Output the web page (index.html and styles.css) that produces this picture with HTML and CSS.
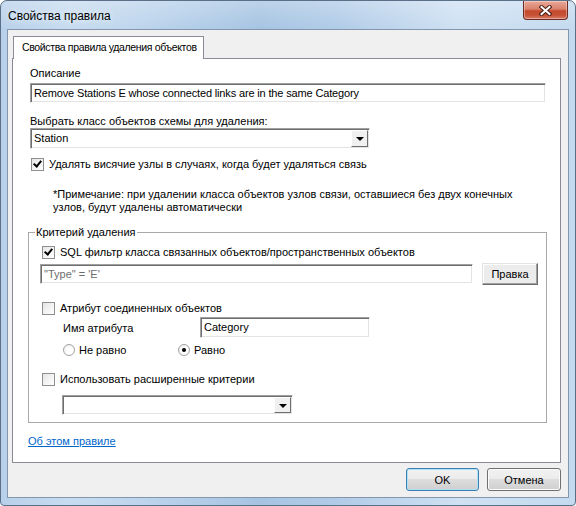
FILE: index.html
```html
<!DOCTYPE html>
<html lang="ru">
<head>
    <meta charset="UTF-8">
    <title>Свойства правила</title>
    <link rel="stylesheet" href="styles.css">
</head>
<body>
    <div class="window">
        <div class="titlebar">
            <span class="title">Свойства правила</span>
            <button class="close" title="Закрыть">
                <svg width="13" height="11" viewBox="0 0 13 11">
                    <path d="M2.5 2 L10.5 9 M10.5 2 L2.5 9" stroke="#4a1d16" stroke-width="4" stroke-linecap="square"/>
                    <path d="M2.5 2 L10.5 9 M10.5 2 L2.5 9" stroke="#fff" stroke-width="2" stroke-linecap="square"/>
                </svg>
            </button>
        </div>

        <div class="client">
            <div class="tabs">
                <div class="tab active">Свойства правила удаления объектов</div>
            </div>

            <div class="tab-page">
                <div class="field-label">Описание</div>
                <div class="textbox description">Remove Stations E whose connected links are in the same Category</div>

                <div class="field-label second">Выбрать класс объектов схемы для удаления:</div>
                <div class="combo station">
                    <span class="combo-text">Station</span>
                    <span class="combo-btn"><span class="arrow"></span></span>
                </div>

                <label class="check-row dangling">
                    <span class="checkbox checked"></span>
                    Удалять висячие узлы в случаях, когда будет удаляться связь
                </label>

                <p class="note">*Примечание: при удалении класса объектов узлов связи, оставшиеся без двух конечных<br>узлов, будут удалены автоматически</p>

                <fieldset class="group">
                    <legend>Критерий удаления</legend>

                    <label class="check-row">
                        <span class="checkbox checked"></span>
                        SQL фильтр класса связанных объектов/пространственных объектов
                    </label>
                    <div class="sql-row">
                        <div class="textbox sql">"Type" = 'E'</div>
                        <button class="btn classic">Правка</button>
                    </div>

                    <label class="check-row attr-check">
                        <span class="checkbox"></span>
                        Атрибут соединенных объектов
                    </label>
                    <div class="attr-row">
                        <span class="attr-label">Имя атрибута</span>
                        <div class="textbox attr">Category</div>
                    </div>
                    <div class="radio-row">
                        <label class="radio-item"><span class="radio"></span>Не равно</label>
                        <label class="radio-item"><span class="radio on"></span>Равно</label>
                    </div>

                    <label class="check-row adv-check">
                        <span class="checkbox"></span>
                        Использовать расширенные критерии
                    </label>
                    <div class="combo adv">
                        <span class="combo-text"></span>
                        <span class="combo-btn"><span class="arrow"></span></span>
                    </div>
                </fieldset>

                <a class="link" href="#">Об этом правиле</a>
            </div>

            <div class="footer">
                <button class="btn default">OK</button>
                <button class="btn">Отмена</button>
            </div>
        </div>
    </div>
</body>
</html>
```

FILE: styles.css
```css
body {
    margin: 0;
    background: #fff;
    font-family: "Liberation Sans", Arial, sans-serif;
    font-size: 11px;
    color: #000;
}

/* window frame */
.window {
    width: 576px;
    height: 506px;
    box-sizing: border-box;
    display: flex;
    flex-direction: column;
    border: 1px solid #5a6f88;
    border-radius: 7px 7px 4px 4px;
    overflow: hidden;
    background:
        linear-gradient(to bottom, rgba(255, 255, 255, 0.25), rgba(255, 255, 255, 0) 28px),
        linear-gradient(to right, #b8d0ea 0%, #c7dcf0 12%, #bcd4ec 25%, #a6c4e2 45%, #b0cbe7 58%, #cfe1f3 80%, #c4daef 100%);
}

.titlebar {
    height: 28px;
    display: flex;
    align-items: flex-start;
    padding-left: 7px;
}

.title {
    margin-top: 9px;
    font-size: 12px;
    line-height: 13px;
    text-shadow: 0 0 6px rgba(255, 255, 255, 0.9);
}

.close {
    margin-left: auto;
    margin-right: 7px;
    width: 45px;
    height: 19px;
    padding: 0;
    display: flex;
    align-items: center;
    justify-content: center;
    border: 1px solid #6c2b21;
    border-top: none;
    border-radius: 0 0 4px 4px;
    background: linear-gradient(to bottom, #e9a99a 0%, #d9816b 45%, #c4492c 55%, #c75237 80%, #d9806a 100%);
    box-shadow: inset 0 0 0 1px rgba(255, 255, 255, 0.35);
}

.client {
    flex: 1;
    margin: 0 6px 7px;
    padding: 6px 7px 6px 4px;
    display: flex;
    flex-direction: column;
    border: 1px solid #8496ac;
    background: #f0f0f0;
}

/* tab control */
.tabs {
    height: 22px;
    display: flex;
}

.tab {
    position: relative;
    z-index: 1;
    box-sizing: border-box;
    margin-left: 1px;
    width: 191px;
    height: 23px;
    padding-left: 8px;
    border: 1px solid #898c95;
    border-bottom: none;
    background: #fff;
    font-size: 10.5px;
    line-height: 21px;
    white-space: nowrap;
    letter-spacing: -0.35px;
}

.tab-page {
    flex: 1;
    display: flex;
    flex-direction: column;
    align-items: flex-start;
    padding: 8px 14px 0 17px;
    border: 1px solid #898c95;
    background: #fff;
}

.field-label {
    line-height: 13px;
}

.field-label.second {
    margin-top: 12px;
}

/* 3D sunken text boxes */
.textbox {
    box-sizing: border-box;
    height: 20px;
    padding: 0 3px;
    line-height: 18px;
    white-space: nowrap;
    border: 1px solid;
    border-color: #a0a0a0 #fff #fff #a0a0a0;
    box-shadow: inset 1px 1px 0 #6e6e6e, inset -1px -1px 0 #e3e3e3;
    background: #fff;
}

.textbox.description {
    align-self: stretch;
    margin-top: 3px;
    letter-spacing: -0.15px;
}

.textbox.sql {
    width: 433px;
    margin-left: -1px;
    color: #6d6d6d;
}

.textbox.attr {
    width: 170px;
    height: 21px;
    line-height: 19px;
}

.combo {
    box-sizing: border-box;
    display: flex;
    border: 1px solid;
    border-color: #a0a0a0 #fff #fff #a0a0a0;
    box-shadow: inset 1px 1px 0 #6e6e6e, inset -1px -1px 0 #e3e3e3;
    background: #fff;
}

.combo-text {
    flex: 1;
    padding-left: 3px;
    line-height: 18px;
}

.combo-btn {
    width: 15px;
    margin: 1px 1px 1px 0;
    display: flex;
    align-items: center;
    justify-content: center;
    border: 1px solid;
    border-color: #fff #6e6e6e #6e6e6e #fff;
    background: #f0f0f0;
}

.arrow {
    width: 0;
    height: 0;
    border-left: 4px solid transparent;
    border-right: 4px solid transparent;
    border-top: 4px solid #000;
    margin-top: 1px;
}

.combo.station {
    width: 340px;
    height: 21px;
}

.combo.adv {
    width: 231px;
    height: 20px;
    margin: 9px 0 0 21px;
}

/* check boxes and radio buttons */
.check-row {
    display: flex;
    align-items: center;
    gap: 5px;
    height: 13px;
    margin-left: 1px;
    line-height: 13px;
}

.check-row.dangling {
    margin-top: 9px;
}

.checkbox {
    box-sizing: border-box;
    width: 13px;
    height: 13px;
    position: relative;
    border: 1px solid #8e8f8f;
    background: linear-gradient(135deg, #e6e6e6, #fff);
}

.checkbox.checked::after {
    content: "";
    position: absolute;
    left: 3px;
    top: 0px;
    width: 3px;
    height: 6px;
    border: solid #000;
    border-width: 0 2px 2px 0;
    transform: rotate(40deg);
}

.note {
    margin: 17px 0 0 23px;
    line-height: 13px;
}

.group {
    align-self: stretch;
    margin: 12px -1px 0 -2px;
    padding: 7px 8px 7px 12px;
    border: 1px solid #a9a9a9;
}

.group legend {
    margin-left: -6px;
    padding: 0 1px;
    line-height: 13px;
}

.sql-row {
    display: flex;
    align-items: center;
    gap: 9px;
    margin-top: 4px;
}

.attr-check {
    margin-top: 17px;
}

.attr-row {
    display: flex;
    align-items: center;
    margin: 2px 0 0 22px;
}

.attr-label {
    width: 137px;
}

.radio-row {
    display: flex;
    margin: 5px 0 0 22px;
    height: 13px;
}

.radio-item {
    display: flex;
    align-items: center;
    gap: 4px;
    width: 115px;
}

.radio {
    box-sizing: border-box;
    width: 12px;
    height: 12px;
    border-radius: 50%;
    border: 1px solid #a2a2a2;
    background: radial-gradient(circle at 60% 60%, #fff 40%, #e4e4e4);
    position: relative;
}

.radio.on::after {
    content: "";
    position: absolute;
    left: 3px;
    top: 3px;
    width: 4px;
    height: 4px;
    border-radius: 50%;
    background: #000;
}

.adv-check {
    margin-top: 17px;
}

.link {
    margin: 12px 0 0 -2px;
    line-height: 13px;
    color: #0066cc;
}

/* dialog buttons */
.footer {
    display: flex;
    justify-content: flex-end;
    gap: 8px;
    margin-top: 5px;
}

.btn {
    height: 23px;
    padding: 0;
    font-family: inherit;
    font-size: 11px;
    color: #000;
    border: 1px solid #707070;
    border-radius: 3px;
    background: linear-gradient(to bottom, #f2f2f2 0%, #ebebeb 49%, #dddddd 50%, #cfcfcf 100%);
    box-shadow: inset 0 0 0 1px #fbfbfb;
}

.footer .btn {
    width: 74px;
}

.footer .btn.default {
    width: 73px;
    border-color: #3c7fb1;
    box-shadow: inset 0 0 0 1px #aee0f6;
}

.btn.classic {
    width: 56px;
    height: 22px;
    border-radius: 0;
    border-color: #e3e3e3 #6e6e6e #6e6e6e #e3e3e3;
    box-shadow: inset -1px -1px 0 #a0a0a0, inset 1px 1px 0 #fff;
    background: #ececec;
}
```
